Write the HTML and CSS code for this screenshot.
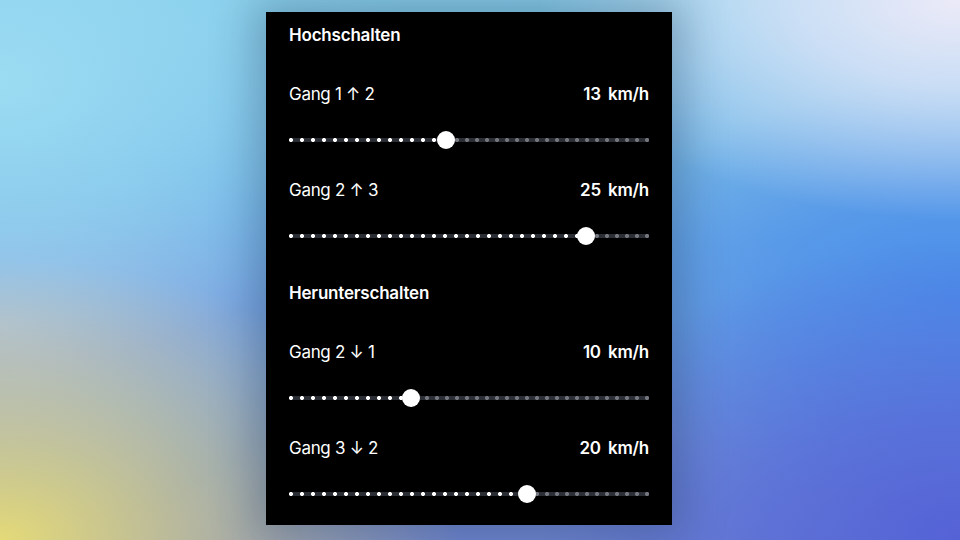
FILE: index.html
```html
<!DOCTYPE html>
<html lang="de">
<head>
<meta charset="utf-8">
<title>Schaltpunkte</title>
<link rel="stylesheet" href="styles.css">
</head>
<body>
  <main class="panel">
    <section class="group">
      <h2 class="group-title">Hochschalten</h2>
      <div class="row">
        <div class="row-head"><span class="label">Gang 1 ↑ 2</span><span class="value">13 km/h</span></div>
        <div class="slider"><div class="fill" style="width:43.6%"></div><div class="rest"></div><span class="thumb" style="left:43.6%"></span></div>
      </div>
      <div class="row">
        <div class="row-head"><span class="label">Gang 2 ↑ 3</span><span class="value">25 km/h</span></div>
        <div class="slider"><div class="fill" style="width:82.5%"></div><div class="rest"></div><span class="thumb" style="left:82.5%"></span></div>
      </div>
    </section>
    <section class="group">
      <h2 class="group-title">Herunterschalten</h2>
      <div class="row">
        <div class="row-head"><span class="label">Gang 2 ↓ 1</span><span class="value">10 km/h</span></div>
        <div class="slider"><div class="fill" style="width:33.9%"></div><div class="rest"></div><span class="thumb" style="left:33.9%"></span></div>
      </div>
      <div class="row">
        <div class="row-head"><span class="label">Gang 3 ↓ 2</span><span class="value">20 km/h</span></div>
        <div class="slider"><div class="fill" style="width:66.1%"></div><div class="rest"></div><span class="thumb" style="left:66.1%"></span></div>
      </div>
    </section>
  </main>
</body>
</html>
```
FILE: styles.css
```css
html, body {
  margin: 0;
  height: 100%;
}

body {
  width: 960px;
  height: 540px;
  overflow: hidden;
  box-sizing: border-box;
  padding: 12px 0 0 266px;
  font-family: Inter, "Noto Sans", sans-serif;
  color: #fff;
  background-color: #6f9fe0;
  background-image:
    radial-gradient(ellipse 460px 280px at 0% 100%, #e4da78 0%, rgba(222,210,130,0.65) 40%, rgba(222,210,130,0) 100%),
    radial-gradient(ellipse 420px 300px at 100% 100%, #5462d6 0%, rgba(86,104,216,0.7) 45%, rgba(86,104,216,0) 100%),
    radial-gradient(ellipse 420px 220px at 100% 0%, #eceaf8 0%, rgba(220,228,248,0.8) 40%, rgba(220,228,248,0) 100%),
    radial-gradient(ellipse 360px 220px at 100% 55%, #4a8eea 0%, rgba(74,142,234,0.6) 50%, rgba(74,142,234,0) 100%),
    radial-gradient(ellipse 420px 280px at 0% 15%, #9cdcf2 0%, rgba(146,214,240,0.7) 50%, rgba(146,214,240,0) 100%),
    radial-gradient(ellipse 320px 200px at 0% 60%, #a8b8e0 0%, rgba(168,184,224,0) 100%),
    linear-gradient(180deg, #86cdea 0%, #6aa8e6 45%, #6f86d0 100%);
}

.panel {
  width: 406px;
  height: 513px;
  box-sizing: border-box;
  padding: 12px 23px 0;
  background: #000;
  box-shadow: 0 0 40px 12px rgba(20, 40, 70, 0.28);
}

.group + .group {
  margin-top: 36px;
}

.group-title {
  margin: 0;
  height: 22px;
  line-height: 22px;
  font-size: 17px;
  font-weight: 600;
  letter-spacing: -0.2px;
}

.row {
  margin-top: 29px;
}

.group-title + .row {
  margin-top: 37px;
}

.row-head {
  display: flex;
  justify-content: space-between;
  align-items: center;
  height: 22px;
  line-height: 22px;
  font-size: 17px;
}

.label {
  font-weight: 400;
  letter-spacing: -0.3px;
}

.value {
  font-weight: 600;
  letter-spacing: -0.2px;
  word-spacing: 3px;
}

.slider {
  position: relative;
  display: flex;
  height: 20px;
  margin-top: 25px;
}

.fill,
.rest {
  height: 100%;
  background-repeat: repeat-x, no-repeat;
}

.fill {
  flex: none;
  background-image:
    radial-gradient(circle at 2px 50%, #fff 1.7px, rgba(255,255,255,0) 2.3px),
    linear-gradient(#2b2e34, #2b2e34);
  background-size: 11px 100%, 100% 4px;
  background-position: 0 50%, 0 50%;
}

.rest {
  flex: 1;
  background-image:
    radial-gradient(circle at 8px 50%, #74777e 1.7px, rgba(116,119,126,0) 2.3px),
    linear-gradient(#2b2e34, #2b2e34);
  background-size: 10px 100%, 100% 4px;
  background-position: right 50%, 0 50%;
}

.thumb {
  position: absolute;
  top: 50%;
  width: 18px;
  height: 18px;
  margin: -9px 0 0 -9px;
  border-radius: 50%;
  background: #fff;
}
```
